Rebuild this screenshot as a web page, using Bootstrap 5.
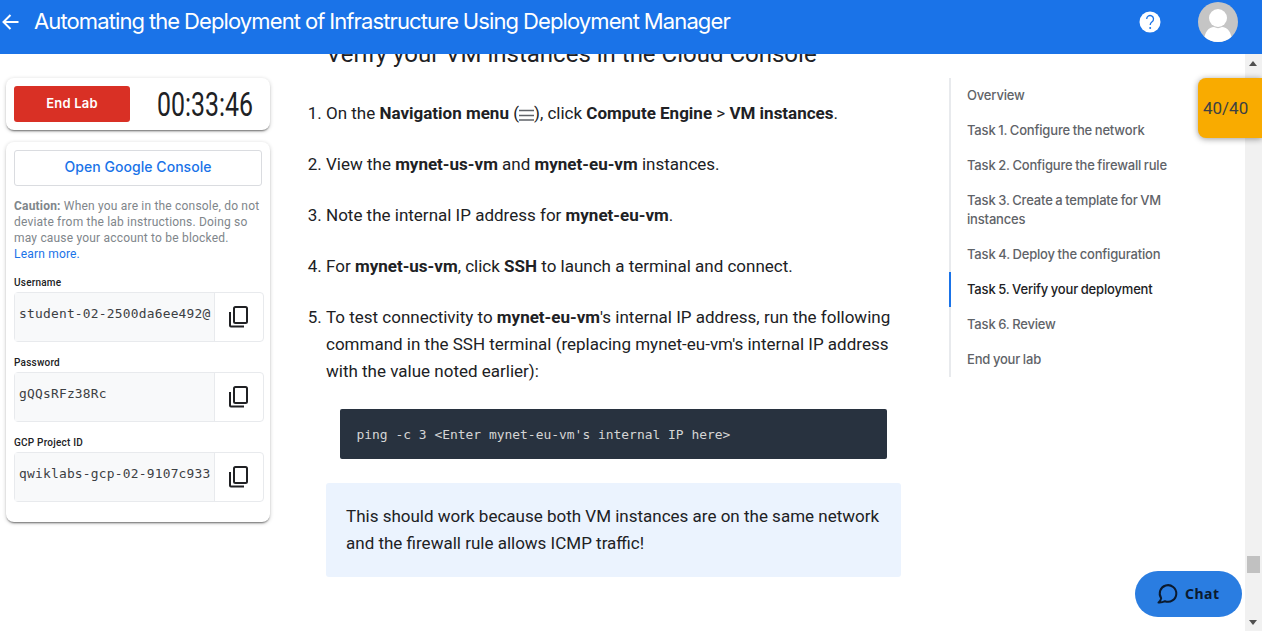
<!DOCTYPE html>
<html lang="en">
<head>
<meta charset="utf-8">
<meta name="viewport" content="width=device-width, initial-scale=1">
<title>Automating the Deployment of Infrastructure Using Deployment Manager</title>
<link href="https://cdn.jsdelivr.net/npm/bootstrap@5.3.0/dist/css/bootstrap.min.css" rel="stylesheet">
<style>
body{font-family:Roboto,"Liberation Sans",sans-serif;color:#202124;height:631px;font-size:17px;line-height:27px}
.topbar{height:54px;background:#1a73e8}
.topbar h1{font:400 22px/28px Inter,sans-serif;color:#fff;letter-spacing:-.89px;word-spacing:-.5px;margin:7px 0 0 14px}
.back{margin-top:8px}
.help{margin:11px 37px 0 0}
.avatar{margin:2px 24px 0 0}
.side{width:270px;padding:24px 0 0 6px}
.panel{border-radius:8px;background:#fff;box-shadow:0 2px 2px -1px rgba(0,0,0,.5),0 1px 4px rgba(0,0,0,.2);padding:8px}
.panel.timer{height:52px}
.btn-end{width:116px;height:36px;background:#d93025;color:#fff;border:0;border-radius:3px;font:600 13px/34px Inter,sans-serif;letter-spacing:.2px;padding:0 0 2px}
.clock{font-size:33px;line-height:37px;transform:scaleX(.755);transform-origin:0 50%;margin-left:27px}
.panel.creds{height:380px;margin-top:12px}
.btn-open{width:248px;height:36px;border:1px solid #dadce0;border-radius:3px;color:#1a73e8;font:500 14px/32px Inter,sans-serif;letter-spacing:.05px;padding:0 0 2px}
.caution{font-size:12px;line-height:16px;letter-spacing:.19px;color:#80868b;margin:12px -4px 14px 0}
.caution a{color:#1a73e8}
.field-name{font-size:10px;line-height:14px;font-weight:500;letter-spacing:.22px}
.copy-row{width:250px;height:50px;border:1px solid #e8eaed;border-radius:4px;margin:2px 0 14px}
.copy-row code{width:200px;background:#f8f9fa;border-right:1px solid #e8eaed;color:#3c4043;font:12.9px/42px "DejaVu Sans Mono",monospace;letter-spacing:.22px;padding-left:4px;overflow:hidden;white-space:nowrap}
.doc{width:595px;margin-left:36px}
.doc h2{font-size:24px;line-height:30px;font-weight:400;margin:-15px 0 31px 20px}
.steps{padding-left:20px}
.steps li{margin-bottom:24px}
.steps strong,.caution strong{font-weight:700}
.menu-glyph{vertical-align:-2px}
.cmd{margin:24px 14px 24px;height:50px;border-radius:2px;background:#28323f;color:#d5d5d5;font:12.95px/51px "DejaVu Sans Mono",monospace;padding-left:16.500px}
.note{height:94px;border-radius:3px;background:#ebf3fe;padding:20px}
.toc{width:240px;margin:24px 0 0 48px}
.toc a{display:block;font:500 13px/19px Inter,sans-serif;letter-spacing:-.17px;word-spacing:-.6px;color:#5f6368;text-decoration:none;border-left:2px solid #e8eaed;padding:8px 10px 8px 16px}
.toc a.active{border-color:#1a73e8;color:#202124}
.track{width:17px;background:#f1f1f1;padding:7px 1px 6px 0}
.thumb{height:17px;background:#c1c1c1;width:13px;margin-bottom:47px}
.score{right:0;top:78px;width:64px;height:60px;border-radius:8px 0 0 8px;background:#f9ab00;color:#3c4043;box-shadow:0 1px 6px rgba(0,0,0,.4);line-height:60px;padding-left:5px}
.chat{left:1135px;top:571px;width:107px;height:46px;border-radius:23px;background:#2a7de1;color:#0b1a2e;font:700 14px/46px "Noto Sans",sans-serif;letter-spacing:.5px}
.chat svg{margin:0 7px 0 21px}
</style>
</head>
<body class="d-flex flex-column overflow-hidden position-relative">
<header class="topbar d-flex flex-shrink-0">
<svg class="back" width="20" height="28" viewBox="0 0 20 28" fill="none" stroke="#fff" stroke-width="2"><path d="M18.500 14H4M10.500 7 3.500 14l7 7"/></svg>
<h1>Automating the Deployment of Infrastructure Using Deployment Manager</h1>
<div class="d-flex ms-auto">
<svg class="help" width="22" height="22" viewBox="0 0 22 22"><circle cx="11" cy="11" r="10.500" fill="#fff"/><path d="M7.700 8a3.400 3.400 0 1 1 5.400 2.700c-1.200.900-1.900 1.400-1.900 3.200" fill="none" stroke="#1a73e8" stroke-width="1.300"/><circle cx="11.200" cy="16.900" r="1" fill="#1a73e8"/></svg>
<svg class="avatar" width="40" height="40" viewBox="0 0 40 40"><clipPath id="avatar"><circle cx="20" cy="20" r="20"/></clipPath><g clip-path="url(#avatar)"><path fill="#c5c5c5" d="M0 0h40v40H0z"/><circle cx="20" cy="16" r="9" fill="#fff"/><path fill="#fff" d="M6 40c0-10 5-15 10-15 3 1.500 5 1.500 8 0 5 0 10 5 10 15z"/></g></svg>
</div>
</header>
<main class="d-flex flex-grow-1 overflow-hidden">
<aside class="side flex-shrink-0">
<div class="panel timer d-flex"><button class="btn btn-end flex-shrink-0">End Lab</button><div class="clock">00:33:46</div></div>
<div class="panel creds">
<button class="btn btn-open">Open Google Console</button>
<p class="caution"><strong>Caution:</strong> When you are in the console, do not<br>deviate from the lab instructions. Doing so<br>may cause your account to be blocked.<br><a class="text-decoration-none" href="#">Learn more.</a></p>
<div class="field-name">Username</div>
<div class="copy-row d-flex"><code>student-02-2500da6ee492@</code><svg class="m-auto" width="22" height="24" viewBox="0 0 22 24" fill="none" stroke="#202124" stroke-width="2"><rect x="6" y="2" width="13" height="16" rx="1.500"/><path d="M2 7v13.500q0 1 1 1h13"/></svg></div>
<div class="field-name">Password</div>
<div class="copy-row d-flex"><code>gQQsRFz38Rc</code><svg class="m-auto" width="22" height="24" viewBox="0 0 22 24" fill="none" stroke="#202124" stroke-width="2"><rect x="6" y="2" width="13" height="16" rx="1.500"/><path d="M2 7v13.500q0 1 1 1h13"/></svg></div>
<div class="field-name">GCP Project ID</div>
<div class="copy-row d-flex"><code>qwiklabs-gcp-02-9107c933</code><svg class="m-auto" width="22" height="24" viewBox="0 0 22 24" fill="none" stroke="#202124" stroke-width="2"><rect x="6" y="2" width="13" height="16" rx="1.500"/><path d="M2 7v13.500q0 1 1 1h13"/></svg></div>
</div>
</aside>
<article class="doc flex-shrink-0">
<h2>Verify your VM instances in the Cloud Console</h2>
<ol class="steps mb-0">
<li>On the <strong>Navigation menu</strong> (<svg class="menu-glyph" width="15" height="12" viewBox="0 0 15 12"><path d="M0 1.500h15M0 6.500h15M0 11h15" stroke="#5f6368" stroke-width="1.700"/></svg>), click <strong>Compute Engine</strong> &gt; <strong>VM instances</strong>.</li>
<li>View the <strong>mynet-us-vm</strong> and <strong>mynet-eu-vm</strong> instances.</li>
<li>Note the internal IP address for <strong>mynet-eu-vm</strong>.</li>
<li>For <strong>mynet-us-vm</strong>, click <strong>SSH</strong> to launch a terminal and connect.</li>
<li>To test connectivity to <strong>mynet-eu-vm</strong>'s internal IP address, run the following<br>command in the SSH terminal (replacing mynet-eu-vm's internal IP address<br>with the value noted earlier):
<div class="cmd">ping -c 3 &lt;Enter mynet-eu-vm's internal IP here&gt;</div>
<div class="note">This should work because both VM instances are on the same network<br>and the firewall rule allows ICMP traffic!</div>
</li>
</ol>
</article>
<nav class="toc flex-shrink-0">
<a href="#">Overview</a>
<a href="#">Task 1. Configure the network</a>
<a href="#">Task 2. Configure the firewall rule</a>
<a href="#">Task 3. Create a template for VM<br>instances</a>
<a href="#">Task 4. Deploy the configuration</a>
<a href="#" class="active">Task 5. Verify your deployment</a>
<a href="#">Task 6. Review</a>
<a href="#">End your lab</a>
</nav>
<div class="track ms-auto d-flex flex-column align-items-center flex-shrink-0">
<svg width="8" height="5"><path d="M0 5 4 0l4 5z" fill="#505050"/></svg><div class="thumb mt-auto"></div><svg width="8" height="5"><path d="M0 0 4 5l4-5z" fill="#505050"/></svg>
</div>
</main>
<div class="score position-absolute">40/40</div>
<button class="chat btn position-absolute d-flex align-items-center p-0 border-0"><svg width="22" height="22" viewBox="0 0 22 22" fill="none" stroke="#0b1a2e" stroke-width="2" stroke-linejoin="round"><path d="M5.200 15.200A8.300 8.300 0 1 1 9 18.200Q6 19.800 2.500 19.500 4.800 18 5.200 15.200z"/></svg>Chat</button>
<script src="https://cdn.jsdelivr.net/npm/bootstrap@5.3.0/dist/js/bootstrap.bundle.min.js"></script>
</body>
</html>
